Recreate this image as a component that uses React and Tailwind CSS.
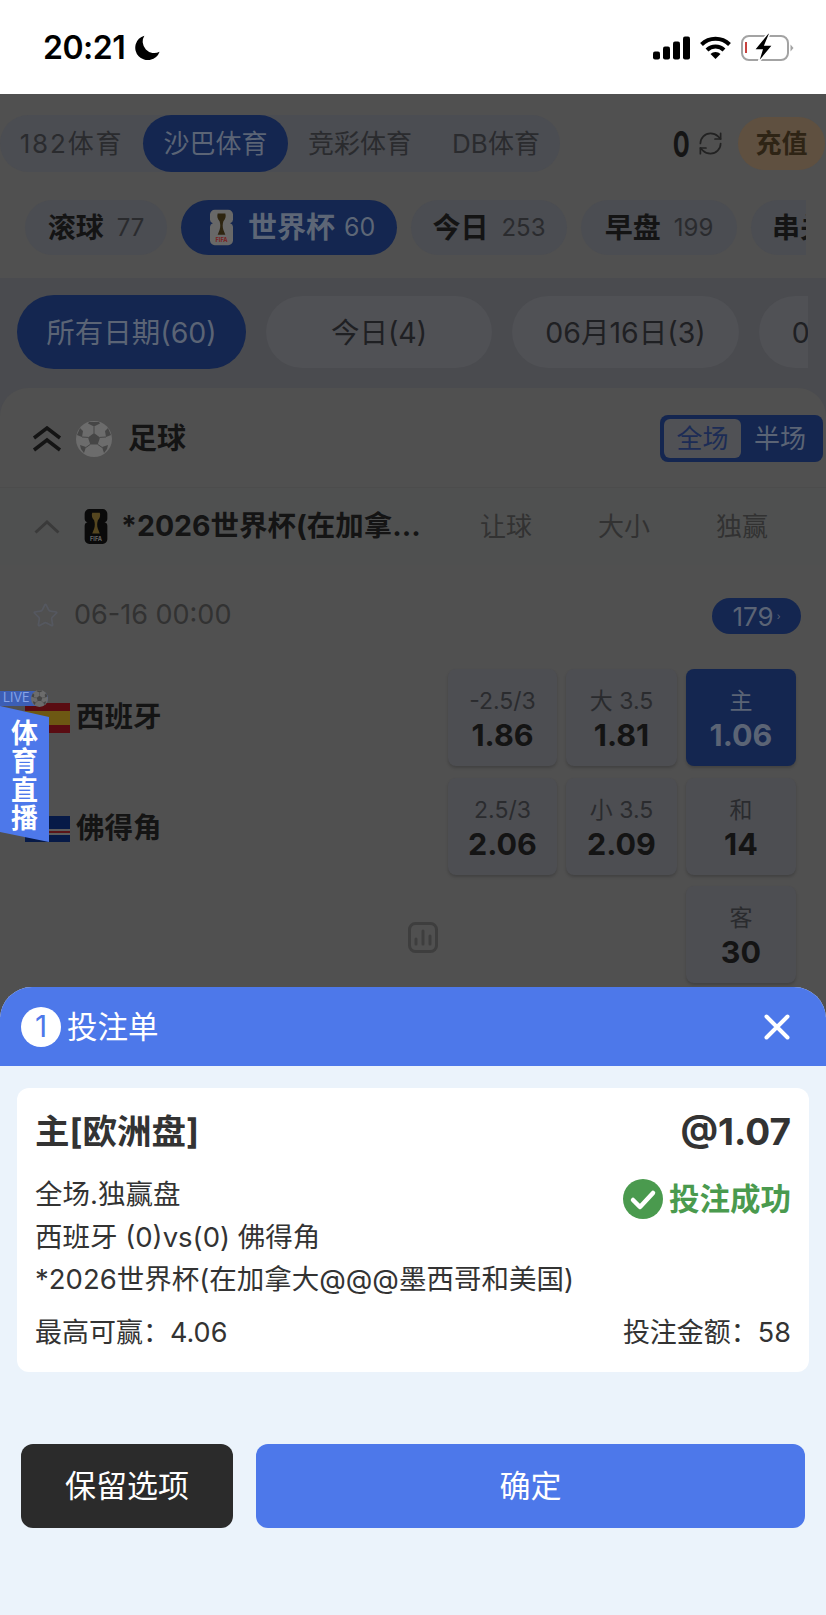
import React from "react";
import { RefreshCw, Star } from "lucide-react";

const sportTabs = [
  { label: "182体育", width: "w-[143px] tracking-[1.8px]" },
  { label: "沙巴体育", width: "w-[145px]", active: true },
  { label: "竞彩体育", width: "w-[144px]" },
  { label: "DB体育", width: "w-[128px]" },
];

const odds = [
  { label: "-2.5/3", value: "1.86", col: "col-start-2", row: "row-start-1" },
  { label: "大 3.5", value: "1.81", col: "col-start-3", row: "row-start-1" },
  { label: "主", value: "1.06", col: "col-start-4", row: "row-start-1", active: true },
  { label: "2.5/3", value: "2.06", col: "col-start-2", row: "row-start-2" },
  { label: "小 3.5", value: "2.09", col: "col-start-3", row: "row-start-2" },
  { label: "和", value: "14", col: "col-start-4", row: "row-start-2" },
  { label: "客", value: "30", col: "col-start-4", row: "row-start-3" },
];

const Ball = ({ className }) => (
  <svg viewBox="0 0 36 36" className={className}>
    <circle cx="18" cy="18" r="18" fill="#6c6c6c" />
    <path d="M18 12l6 4.4-2.3 7h-7.4l-2.3-7z" fill="#464646" />
    <path d="M12 2.5l6 3 6-3-1-1.5h-10zM1 14l5 2 1-6-3-3zM35 14l-5 2-1-6 3-3zM8 32l2-6-6-2 1 4zM28 32l-2-6 6-2-1 4z" fill="#464646" />
    <path d="M18 5.500v6.500M12 16.400l-6-.4M24 16.400l6-.4M14.300 23.400l-4.300 3M21.700 23.400l4.300 3" stroke="#464646" strokeWidth="1" />
  </svg>
);

const FifaBadge = ({ className, shape, cup, label }) => (
  <svg viewBox="0 0 24 37" className={className}>
    <path d="M5 0h14a5 5 0 0 1 5 5v5a4 4 0 0 1-3 4 4 4 0 0 1 3 4v14a5 5 0 0 1-5 5H5a5 5 0 0 1-5-5V18a4 4 0 0 1 3-4 4 4 0 0 1-3-4V5a5 5 0 0 1 5-5z" fill={shape} />
    <path d="M8 4h8c1 3 0 6-2 8-1 3-1 6 0 9l2 5H8l2-5c1-3 1-6 0-9-2-2-3-5-2-8z" fill={cup} />
    <text x="12" y="34" textAnchor="middle" fontSize="6" fontWeight="700" fill={label}>FIFA</text>
  </svg>
);

const StatusBar = () => (
  <div className="flex h-[94px] items-center justify-between bg-white pl-[43px] pr-[32px] pt-[1px]">
    <div className="flex items-center gap-[9px]">
      <span className="text-[32px] leading-none font-semibold tracking-[-0.5px] text-black">20:21</span>
      <svg viewBox="0 0 24 24" className="ml-[1px] h-[25px] w-[25px]">
        <path d="M9 .6A12 12 0 1 0 23.600 16 11 11 0 0 1 9 .6z" fill="#000" />
      </svg>
    </div>
    <div className="flex items-center gap-[9px]">
      <svg viewBox="0 0 37 23" className="h-[24px] w-[37px]" fill="#000">
        <rect x="0" y="15" width="7" height="8" rx="2" />
        <rect x="10" y="10" width="7" height="13" rx="2" />
        <rect x="20" y="5" width="7" height="18" rx="2" />
        <rect x="30" y="0" width="7" height="23" rx="2" />
      </svg>
      <svg viewBox="0 0 32 23" className="h-[23px] w-[33px]" fill="none" stroke="#000" strokeWidth="4">
        <path d="M2 8.500a20 20 0 0 1 28 0" />
        <path d="M7.500 14a12 12 0 0 1 17 0" />
        <path d="M16 23l-5-5a7 7 0 0 1 10 0z" fill="#000" stroke="none" />
      </svg>
      <svg viewBox="0 0 53 30" className="h-[30px] w-[53px]">
        <rect x="1" y="3" width="46" height="24" rx="7" fill="none" stroke="#a3a3a3" strokeWidth="2" />
        <path d="M49.500 11.500l3 3.500-3 3.500z" fill="#a3a3a3" />
        <rect x="4" y="9" width="2" height="11" fill="#c8423f" />
        <path d="M27 0L13 17h8l-4 13 15-18h-8l5-12z" fill="#000" stroke="#fff" strokeWidth="1.500" />
      </svg>
    </div>
  </div>
);

const SportTabs = () => (
  <div className="flex h-[57px] items-center justify-between pr-[1px]">
    <div className="flex h-[57px] rounded-full bg-[#4b4d52]">
      {sportTabs.map((tab) => (
        <div
          key={tab.label}
          className={`flex items-center justify-center rounded-full text-[26px] ${tab.width} ${
            tab.active ? "bg-[#142650] text-[#5b6475]" : "text-[#2a2b2e]"
          }`}
        >
          {tab.label}
        </div>
      ))}
    </div>
    <div className="flex items-center">
      <span className="scale-x-[.7] text-[36px] leading-none font-bold text-[#151515]">0</span>
      <RefreshCw size={27} strokeWidth={1.5} className="ml-[4px] mr-[14px] text-[#222222]" />
      <div className="flex h-[53px] w-[87px] items-center justify-center rounded-full bg-[#5f5040] text-[26px] font-semibold text-[#2e2415]">
        充值
      </div>
    </div>
  </div>
);

const MarketPill = ({ label, count, width, children, active }) =>
  active ? (
    <div className={`flex h-[55px] shrink-0 items-center rounded-full bg-[#142650] pl-[29px] text-[#5d6676] ${width}`}>
      {children}
      <span className="ml-[15px] text-[29px] font-bold">{label}</span>
      <span className="ml-[9px] text-[25px]">{count}</span>
    </div>
  ) : (
    <div className={`flex h-[55px] shrink-0 items-center justify-center rounded-full bg-[#4b4d52] text-[#141414] ${width}`}>
      <span className="text-[28px] font-bold">{label}</span>
      <span className="ml-[13px] text-[24px] text-[#2a2b2e]">{count}</span>
    </div>
  );

const DatePill = ({ label, width, active }) => (
  <div
    className={`flex shrink-0 items-center justify-center rounded-full pt-[2px] text-[28.500px] ${width} ${
      active ? "h-[74px] bg-[#142650] text-[#5b6475]" : "h-[72px] bg-[#505155] text-[#1f2023]"
    }`}
  >
    {label}
  </div>
);

const OddsCell = ({ label, value, col, row, active }) => (
  <div
    className={`flex h-[97px] flex-col items-center rounded-[8px] pt-[16px] shadow-[0_2px_3px_rgba(0,0,0,0.18)] ${col} ${row} ${
      active ? "bg-[#142650] text-[#5b6475]" : "bg-[#4d4e52] text-[#141414]"
    }`}
  >
    <span className={`text-[23px] leading-[32px] ${active ? "" : "text-[#2a2b2e]"}`}>{label}</span>
    <span className="text-[30.500px] leading-[36px] font-bold">{value}</span>
  </div>
);

const TeamCell = ({ name, row, children, offset }) => (
  <div className={`col-start-1 flex items-center pl-[25px] ${row} ${offset}`}>
    {children}
    <span className="ml-[6px] text-[28.500px] font-semibold text-[#141414]">{name}</span>
  </div>
);

const MatchCard = () => (
  <div className="rounded-t-[28px] bg-[#505050]">
    <div className="flex h-[100px] items-center justify-between border-b border-[#4c4c4c] pl-[32px] pr-[3px] pt-[2px]">
      <div className="flex items-center">
        <svg viewBox="0 0 29 26" className="h-[26px] w-[30px]" fill="none" stroke="#141414" strokeWidth="3.500">
          <path d="M1.500 12L14.500 2 27.500 12" />
          <path d="M1.500 24l13-10 13 10" />
        </svg>
        <Ball className="ml-[14px] h-[36px] w-[36px]" />
        <span className="ml-[16px] text-[29px] font-bold text-[#141414]">足球</span>
      </div>
      <div className="flex h-[47px] w-[163px] items-center rounded-[8px] bg-[#142650] pl-[4px]">
        <div className="flex h-[39px] w-[77px] items-center justify-center rounded-[6px] bg-[#505155] text-[26px] text-[#1c2c55]">全场</div>
        <div className="flex w-[78px] items-center justify-center text-[26px] text-[#5b6475]">半场</div>
      </div>
    </div>

    <div className="flex h-[77px] items-center bg-[#4f5050] pl-[34px]">
      <svg viewBox="0 0 26 14" className="h-[14px] w-[26px]" fill="none" stroke="#3a3a3a" strokeWidth="3">
        <path d="M1.500 12.500L13 2l11.500 10.500" />
      </svg>
      <FifaBadge className="ml-[24px] h-[35px] w-[24px]" shape="#0a0a0a" cup="#55461f" label="#666666" />
      <span className="ml-[13px] w-[306px] text-[28.500px] font-bold whitespace-nowrap text-[#141414]">*2026世界杯(在加拿...</span>
      <span className="ml-[53px] text-[26px] text-[#323232]">让球</span>
      <span className="ml-[66px] text-[26px] text-[#323232]">大小</span>
      <span className="ml-[66px] text-[26px] text-[#323232]">独赢</span>
    </div>

    <div className="flex h-[104px] items-start justify-between pl-[32px] pr-[25px] pt-[33px]">
      <div className="flex items-center">
        <Star size={27} strokeWidth={1.5} className="text-[#555860]" />
        <span className="ml-[15px] text-[27px] leading-[34px] text-[#323232]">06-16 00:00</span>
      </div>
      <div className="flex h-[36px] w-[89px] items-center justify-center rounded-full bg-[#142650] text-[26px] text-[#5b6475]">
        179<span className="ml-[3px] text-[10px]">›</span>
      </div>
    </div>

    <div className="grid grid-cols-[439px_109px_111px_110px] gap-x-[9px] gap-y-[11.5px]">
      <TeamCell name="西班牙" row="row-start-1" offset="">
        <svg viewBox="0 0 45 30" className="h-[30px] w-[45px]">
          <rect width="45" height="30" fill="#5a0c12" />
          <rect y="8" width="45" height="14" fill="#6d5813" />
        </svg>
      </TeamCell>
      <TeamCell name="佛得角" row="row-start-2" offset="pt-[5px]">
        <svg viewBox="0 0 45 26" className="h-[26px] w-[45px]">
          <rect width="45" height="26" fill="#071a47" />
          <rect y="13" width="45" height="6" fill="#5c5c5c" />
          <rect y="15" width="45" height="2" fill="#5a1418" />
        </svg>
      </TeamCell>
      <div className="col-start-1 row-start-3 flex items-center justify-end pr-[1px] pt-[5px]">
        <svg viewBox="0 0 30 31" className="h-[31px] w-[30px]" fill="none" stroke="#3e3e3e" strokeWidth="3">
          <rect x="1.500" y="1.500" width="27" height="28" rx="6" />
          <path d="M8 22v-5M15 22V9M22 22v-8" strokeLinecap="round" />
        </svg>
      </div>
      {odds.map((cell) => (
        <OddsCell key={cell.label} {...cell} />
      ))}
    </div>
  </div>
);

const LiveBadge = () => (
  <div className="absolute left-0 top-[691px] w-[49px]">
    <div className="flex h-[15px] w-[48px] items-center rounded-r-full bg-[#3c5eb5]">
      <span className="pl-[3px] text-[12.500px] leading-none text-[#86a3e8]">LIVE</span>
    </div>
    <Ball className="absolute left-[31px] top-[-1px] h-[17px] w-[17px]" />
    <div className="flex h-[136px] w-[49px] justify-start bg-[#4d78ea] pl-[9px] pt-[13px] [clip-path:polygon(0_0,100%_11px,100%_100%,0_126px)]">
      <span className="text-[27px] leading-[27px] font-bold tracking-[1.5px] text-white [writing-mode:vertical-rl]">体育直播</span>
    </div>
  </div>
);

const BetSlip = () => (
  <div className="flex flex-1 flex-col overflow-hidden rounded-t-[32px] bg-[#ebf3fb]">
    <div className="flex h-[79px] shrink-0 items-center justify-between bg-[#4d78ea] pl-[21px] pr-[36px]">
      <div className="flex items-center">
        <div className="flex h-[40px] w-[40px] items-center justify-center rounded-full bg-white text-[30px] text-[#4d78ea]">1</div>
        <span className="ml-[6px] text-[30.500px] text-white">投注单</span>
      </div>
      <svg viewBox="0 0 26 26" className="h-[26px] w-[26px]" fill="none" stroke="#fff" strokeWidth="4" strokeLinecap="round">
        <path d="M2.500 2.500l21 21M23.500 2.500l-21 21" />
      </svg>
    </div>

    <div className="mx-[17px] mt-[22px] h-[284px] rounded-[12px] bg-white pl-[18px] pr-[18px] pt-[22px] text-[#333333]">
      <div className="flex h-[44px] items-center justify-between">
        <span className="text-[34.500px] font-bold">主[欧洲盘]</span>
        <span className="text-[37px] font-bold">@1.07</span>
      </div>
      <div className="mt-[19px] flex items-start justify-between">
        <div className="text-[27.500px] leading-[42.5px]">
          <div>全场.独赢盘</div>
          <div>西班牙 (0)vs(0) 佛得角</div>
          <div>*2026世界杯(在加拿大@@@墨西哥和美国)</div>
        </div>
        <div className="mt-[3px] flex items-center">
          <svg viewBox="0 0 40 40" className="h-[40px] w-[40px]">
            <circle cx="20" cy="20" r="20" fill="#4a9a4e" />
            <path d="M10 21l7 7 13-14" fill="none" stroke="#fff" strokeWidth="4.500" strokeLinecap="round" strokeLinejoin="round" />
          </svg>
          <span className="ml-[6px] text-[30.500px] font-bold text-[#4a9a4e]">投注成功</span>
        </div>
      </div>
      <div className="mt-[13px] flex h-[40px] items-center justify-between text-[27px]">
        <span>最高可赢：4.06</span>
        <span>投注金额：58</span>
      </div>
    </div>

    <div className="mt-[72px] flex gap-[23px] pl-[21px] pr-[21px]">
      <button type="button" className="h-[84px] w-[212px] rounded-[12px] bg-[#2b2b2b] text-[31px] text-white">保留选项</button>
      <button type="button" className="h-[84px] flex-1 rounded-[12px] bg-[#4d78ea] text-[31px] text-white">确定</button>
    </div>
  </div>
);

const App = () => (
  <div className="relative flex h-[1615px] w-[826px] flex-col overflow-hidden bg-[#505050] font-['Inter','Noto_Sans_CJK_SC',sans-serif]">
    <StatusBar />
    <div className="h-[893px] shrink-0 overflow-hidden">
      <div className="pt-[21px]">
        <SportTabs />
      </div>
      <div className="mt-[28px] flex w-[806px] gap-[14px] overflow-hidden pl-[25px]">
        <MarketPill label="滚球" count="77" width="w-[142px]" />
        <MarketPill label="世界杯" count="60" width="w-[216px]" active>
          <FifaBadge className="h-[37px] w-[23px]" shape="#686868" cup="#2e2510" label="#7a2020" />
        </MarketPill>
        <MarketPill label="今日" count="253" width="w-[156px]" />
        <MarketPill label="早盘" count="199" width="w-[156px]" />
        <div className="flex h-[55px] w-[80px] shrink-0 items-center rounded-full bg-[#4b4d52] pl-[21px] text-[28px] font-bold whitespace-nowrap text-[#141414]">串关</div>
      </div>
      <div className="mt-[23px] bg-[#4a4b4f] pt-[17px]">
        <div className="flex w-[808px] items-center gap-[20px] overflow-hidden pl-[17px]">
          <DatePill label="所有日期(60)" width="w-[229px]" active />
          <DatePill label="今日(4)" width="w-[226px]" />
          <DatePill label="06月16日(3)" width="w-[227px]" />
          <DatePill label="06月17日(5)" width="w-[224px]" />
        </div>
        <div className="mt-[19px]">
          <MatchCard />
        </div>
      </div>
    </div>
    <BetSlip />
    <LiveBadge />
  </div>
);

export default App;
